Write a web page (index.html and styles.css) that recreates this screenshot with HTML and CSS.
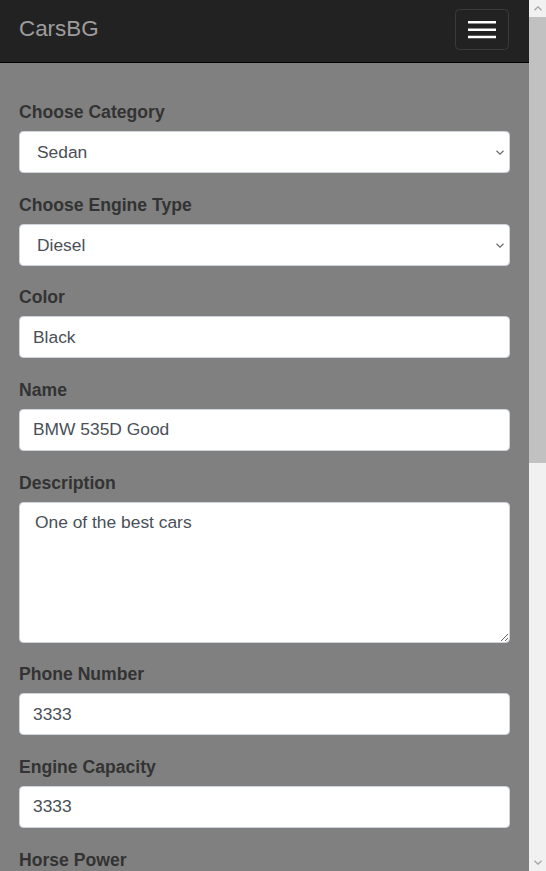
FILE: index.html
```html
<!DOCTYPE html>
<html lang="en">
<head>
<meta charset="utf-8">
<title>CarsBG</title>
<link rel="stylesheet" href="styles.css">
</head>
<body>
<div class="page">
  <nav class="navbar">
    <span class="brand">CarsBG</span>
    <button class="toggler" type="button" aria-label="Toggle navigation">
      <svg width="28" height="18" viewBox="0 0 28 18"><path d="M0 1.3H28M0 8.7H28M0 16H28" stroke="#fff" stroke-width="2.5" fill="none"/></svg>
    </button>
  </nav>
  <main class="content">
    <form class="car-form">
      <div class="group">
        <label class="label">Choose Category</label>
        <div class="select-wrap">
          <select class="control select"><option>Sedan</option><option>SUV</option><option>Coupe</option></select>
          <svg class="chevron" width="8" height="5" viewBox="0 0 8 5"><path d="M0.5 0.8L4 4.2L7.5 0.8" stroke="#6b6b6b" stroke-width="1.2" fill="none"/></svg>
        </div>
      </div>
      <div class="group">
        <label class="label">Choose Engine Type</label>
        <div class="select-wrap">
          <select class="control select"><option>Diesel</option><option>Petrol</option><option>Electric</option></select>
          <svg class="chevron" width="8" height="5" viewBox="0 0 8 5"><path d="M0.5 0.8L4 4.2L7.5 0.8" stroke="#6b6b6b" stroke-width="1.2" fill="none"/></svg>
        </div>
      </div>
      <div class="group">
        <label class="label">Color</label>
        <input class="control" type="text" value="Black">
      </div>
      <div class="group">
        <label class="label">Name</label>
        <input class="control" type="text" value="BMW 535D Good">
      </div>
      <div class="group">
        <label class="label">Description</label>
        <textarea class="control area">One of the best cars</textarea>
      </div>
      <div class="group">
        <label class="label">Phone Number</label>
        <input class="control" type="text" value="3333">
      </div>
      <div class="group">
        <label class="label">Engine Capacity</label>
        <input class="control" type="text" value="3333">
      </div>
      <div class="group">
        <label class="label">Horse Power</label>
        <input class="control" type="text" value="3333">
      </div>
    </form>
  </main>
</div>
<div class="scrollbar" aria-hidden="true">
  <div class="sb-btn">
    <svg width="8" height="5" viewBox="0 0 8 5"><path d="M0.5 4.2L4 0.8L7.5 4.2" stroke="#a3a3a3" stroke-width="1.3" fill="none"/></svg>
  </div>
  <div class="sb-thumb"></div>
  <div class="sb-track"></div>
  <div class="sb-btn">
    <svg width="8" height="5" viewBox="0 0 8 5"><path d="M0.5 0.8L4 4.2L7.5 0.8" stroke="#a3a3a3" stroke-width="1.3" fill="none"/></svg>
  </div>
</div>
</body>
</html>
```
FILE: styles.css
```css
html {
  background: #808080;
}
body {
  margin: 0;
  height: 100vh;
  overflow: hidden;
  display: flex;
  background: #808080;
  font-family: "Liberation Sans", Arial, sans-serif;
  color: #333;
}
.page {
  flex: 1;
  min-width: 0;
  height: 100vh;
  overflow: hidden;
}
.scrollbar {
  width: 17px;
  flex: 0 0 17px;
  height: 100vh;
  display: flex;
  flex-direction: column;
  background: #f1f1f1;
}
.sb-btn {
  height: 17px;
  flex: 0 0 17px;
  display: flex;
  align-items: center;
  justify-content: center;
  background: #f1f1f1;
}
.sb-thumb {
  height: 446px;
  flex: 0 0 446px;
  background: #c1c1c1;
}
.sb-track {
  flex: 1;
  background: #f1f1f1;
}
.navbar {
  box-sizing: border-box;
  height: 63px;
  background: #222222;
  border-bottom: 1px solid #000;
  display: flex;
  align-items: flex-start;
  justify-content: space-between;
  padding: 9px 20px 0 19px;
}
.brand {
  font-size: 22.4px;
  color: #9d9d9d;
  line-height: 30px;
  margin-top: 5px;
}
.toggler {
  width: 54px;
  height: 41px;
  box-sizing: border-box;
  background: transparent;
  border: 1px solid #3a3a3a;
  border-radius: 4.4px;
  display: flex;
  align-items: center;
  justify-content: center;
  padding: 0;
}
.toggler svg {
  display: block;
}
.content {
  padding: 37px 19px 40px;
}
.car-form {
  display: flex;
  flex-direction: column;
}
.group {
  display: flex;
  flex-direction: column;
  margin-bottom: 19.67px;
}
.label {
  font-size: 17.6px;
  font-weight: bold;
  line-height: 24px;
  margin-bottom: 7px;
  color: #333;
}
.control {
  box-sizing: border-box;
  height: 42px;
  width: 100%;
  border: 1px solid #ced4da;
  border-radius: 4.4px;
  background: #fff;
  padding: 6px 12px 6px 13px;
  font-family: "Liberation Sans", Arial, sans-serif;
  font-size: 17.4px;
  line-height: 26px;
  color: #495057;
  margin: 0;
  outline: none;
}
.select-wrap {
  position: relative;
  display: flex;
}
.select {
  -webkit-appearance: none;
  appearance: none;
  padding-left: 17px;
  padding-right: 24px;
}
.chevron {
  position: absolute;
  right: 6px;
  top: 19px;
  pointer-events: none;
}
.area {
  height: 141px;
  padding-left: 15px;
  resize: vertical;
}
```
